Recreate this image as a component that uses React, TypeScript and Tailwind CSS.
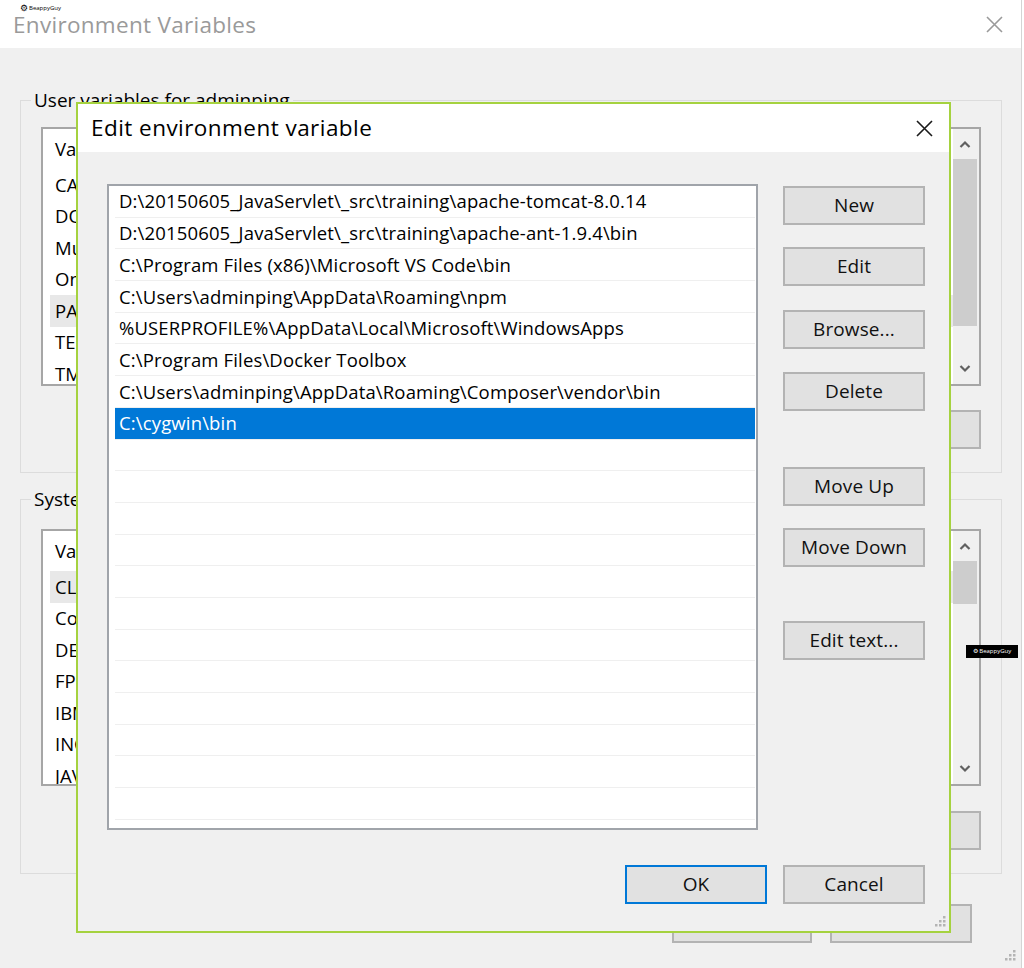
const paths = [
  "D:\\20150605_JavaServlet\\_src\\training\\apache-tomcat-8.0.14",
  "D:\\20150605_JavaServlet\\_src\\training\\apache-ant-1.9.4\\bin",
  "C:\\Program Files (x86)\\Microsoft VS Code\\bin",
  "C:\\Users\\adminping\\AppData\\Roaming\\npm",
  "%USERPROFILE%\\AppData\\Local\\Microsoft\\WindowsApps",
  "C:\\Program Files\\Docker Toolbox",
  "C:\\Users\\adminping\\AppData\\Roaming\\Composer\\vendor\\bin",
  "C:\\cygwin\\bin",
];

const userVars = ["CATALINA_HOME", "DOCKER_TOOLBOX_INSTALL_PATH", "MuleSoft", "OneDrive", "PATH", "TEMP", "TMP"];
const systemVars = ["CLASSPATH", "ComSpec", "DEFAULT_JVM", "FPS_BROWSER_USER_PROFILE", "IBM_JAVA_OPTIONS", "INCLUDE", "JAVA_HOME"];

function XIcon({ color }: { color: string }) {
  return (
    <svg width="17" height="17" viewBox="0 0 17 17">
      <path d="M1 1 L16 16 M16 1 L1 16" stroke={color} strokeWidth="1.6" fill="none" />
    </svg>
  );
}

function Chevron({ up }: { up?: boolean }) {
  return (
    <svg width="12" height="8" viewBox="0 0 12 8">
      <path d={up ? "M1.5 7 L6 2.5 L10.5 7" : "M1.5 1 L6 5.5 L10.5 1"} stroke="#606060" strokeWidth="2.2" fill="none" />
    </svg>
  );
}

function Grip() {
  return (
    <svg width="13" height="13" viewBox="0 0 13 13">
      {[
        [10, 1],
        [6, 5],
        [10, 5],
        [2, 9],
        [6, 9],
        [10, 9],
      ].map(([x, y], i) => (
        <rect key={i} x={x} y={y} width="2.5" height="2.5" fill="#b4b4b4" />
      ))}
    </svg>
  );
}

function WinButton({ label, className = "", primary = false }: { label: string; className?: string; primary?: boolean }) {
  return (
    <div
      className={`flex h-[39px] items-center justify-center border-2 bg-[#e1e1e1] text-[19px] tracking-[0.1px] text-[#111] ${
        primary ? "border-[#0078d7]" : "border-[#b3b3b3]"
      } ${className}`}
    >
      {label}
    </div>
  );
}

function BgList({ rows, highlight, thumbHeight, height }: { rows: string[]; highlight: number; thumbHeight: number; height: number }) {
  return (
    <div className="flex w-[940px] overflow-hidden border-2 border-[#a6a6a6] bg-white" style={{ height }}>
      <div className="flex-1 text-[18.5px] text-black">
        <div className="flex h-[40px] items-center pl-[12px]">Variable</div>
        {rows.map((r, i) => (
          <div key={r} className={`ml-[7px] flex h-[31.5px] items-center pl-[5px] ${i === highlight ? "bg-[#e8e8e8]" : ""}`}>
            {r}
          </div>
        ))}
      </div>
      <div className="flex w-[26px] flex-col bg-[#f0f0f0] pr-[2px]">
        <div className="flex h-[30px] items-center justify-center">
          <Chevron up />
        </div>
        <div className="bg-[#cdcdcd]" style={{ height: thumbHeight }} />
        <div className="flex-1" />
        <div className="flex h-[30px] items-center justify-center">
          <Chevron />
        </div>
      </div>
    </div>
  );
}

function Group({ title, children, className = "" }: { title: string; children: React.ReactNode; className?: string }) {
  return (
    <fieldset className={`w-[982px] border border-[#dcdcdc] p-0 ${className}`}>
      <legend className="ml-[10px] px-[3px] text-[19px] leading-[24px] text-black">{title}</legend>
      <div className="px-[20px] pb-[23px]">{children}</div>
    </fieldset>
  );
}

function EditDialog() {
  const empty = Array.from({ length: 13 });
  const buttons: [string, string][] = [
    ["New", "mt-0"],
    ["Edit", "mt-[22px]"],
    ["Browse...", "mt-[24px]"],
    ["Delete", "mt-[23px]"],
    ["Move Up", "mt-[56px]"],
    ["Move Down", "mt-[22px]"],
    ["Edit text...", "mt-[54px]"],
  ];
  return (
    <div className="absolute left-[76px] top-[102px] flex h-[831px] w-[875px] flex-col border-2 border-[#a5d23f] bg-[#f0f0f0]">
      <div className="flex h-[48px] shrink-0 items-center justify-between bg-white pl-[13px] pr-[16px]">
        <span className="text-[22.5px] tracking-[0.45px] text-black">Edit environment variable</span>
        <XIcon color="#1a1a1a" />
      </div>
      <div className="flex pl-[29px] pt-[32px]">
        <div className="h-[646px] w-[651px] overflow-hidden border-2 border-[#a0a4aa] bg-white pl-[6px] pr-[1px]">
          {paths.map((p, i) => (
            <div
              key={p}
              className={`flex h-[31.7px] items-center whitespace-nowrap border-b border-[#efefef] pl-[4px] text-[18.5px] tracking-[0.15px] ${
                i === paths.length - 1 ? "bg-[#0078d7] text-white" : "text-black"
              }`}
            >
              {p}
            </div>
          ))}
          {empty.map((_, i) => (
            <div key={i} className="h-[31.7px] border-b border-[#efefef]" />
          ))}
        </div>
        <div className="ml-[25px] flex w-[142px] flex-col pt-[2px]">
          {buttons.map(([label, mt]) => (
            <WinButton key={label} label={label} className={mt} />
          ))}
        </div>
      </div>
      <div className="mt-[35px] flex justify-end gap-[16px] pr-[24px]">
        <WinButton label="OK" primary className="w-[142px]" />
        <WinButton label="Cancel" className="w-[142px]" />
      </div>
      <div className="absolute bottom-[3px] right-[3px]">
        <Grip />
      </div>
    </div>
  );
}

export default function App() {
  return (
    <div className="relative h-[968px] w-[1024px] overflow-hidden bg-white font-['Open_Sans',sans-serif]">
      <div className="flex h-full w-[1022px] flex-col border-r border-[#d4d4d4]">
        <div className="flex h-[48px] shrink-0 items-center justify-between bg-white pl-[13px] pr-[18px]">
          <span className="pt-[2px] text-[22.5px] tracking-[0.3px] text-[#9a9a9a]">Environment Variables</span>
          <XIcon color="#9a9a9a" />
        </div>
        <div className="flex flex-1 flex-col bg-[#f0f0f0] pl-[20px] pt-[40px]">
          <Group title="User variables for adminping">
            <div className="pt-[15px]">
              <BgList rows={userVars} highlight={4} thumbHeight={167} height={259} />
              <div className="mt-[24px] flex w-[940px] justify-end gap-[16px]">
                <WinButton label="New..." className="w-[142px]" />
                <WinButton label="Edit..." className="w-[142px]" />
                <WinButton label="Delete" className="w-[142px]" />
              </div>
            </div>
          </Group>
          <Group title="System variables" className="mt-[14px]">
            <div className="pt-[18px]">
              <BgList rows={systemVars} highlight={0} thumbHeight={43} height={257} />
              <div className="mt-[25px] flex w-[940px] justify-end gap-[16px]">
                <WinButton label="New..." className="w-[142px]" />
                <WinButton label="Edit..." className="w-[142px]" />
                <WinButton label="Delete" className="w-[142px]" />
              </div>
            </div>
          </Group>
          <div className="mt-[30px] flex w-[982px] justify-end gap-[18px] pr-[30px]">
            <WinButton label="OK" className="w-[140px]" />
            <WinButton label="Cancel" className="w-[142px]" />
          </div>
        </div>
      </div>
      <div className="absolute bottom-[6px] right-[8px]">
        <Grip />
      </div>
      <div className="absolute left-[20px] top-[3px] flex items-center gap-[1px] text-[6px] leading-[8px] text-black">
        <span className="text-[9px] leading-[9px]">⚙</span>
        <span>BeappyGuy</span>
      </div>
      <div className="absolute left-[966px] top-[645px] flex h-[13px] w-[52px] items-center justify-center bg-black text-[6px] text-white">
        ⚙ BeappyGuy
      </div>
      <EditDialog />
    </div>
  );
}
